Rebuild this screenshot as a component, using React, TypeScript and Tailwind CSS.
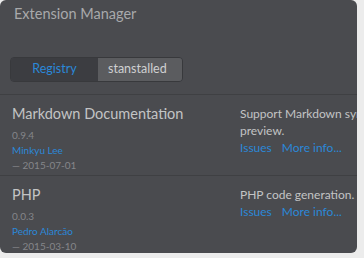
const EXTENSIONS = [
  {
    name: 'Markdown Documentation',
    version: '0.9.4',
    author: 'Minkyu Lee',
    date: '2015-07-01',
    lines: ['Support Markdown syntax', 'preview.'],
  },
  {
    name: 'PHP',
    version: '0.0.3',
    author: 'Pedro Alarcão',
    date: '2015-03-10',
    lines: ['PHP code generation.'],
  },
]

export default function App() {
  return (
    <div className="h-[258px] w-[364px] overflow-hidden bg-[#ececec] font-['Lato',sans-serif]">
      <div className="h-[253px] w-[357px] overflow-hidden rounded-[6px] bg-[#4a4b4f]">
        <div className="h-[95px] border-b border-[#3f4043] px-[14px] pt-[3px]">
          <div className="text-[14.5px] leading-[22px] text-[#a8a9ab]">Extension Manager</div>
          <div className="mt-[32px] -ml-[4px] flex h-[25px] w-[173px] overflow-hidden rounded-[4px] border border-[#38393c] text-[12.5px]">
            <div className="flex w-[87px] items-center justify-center bg-[#3c3d41] text-[#2b88d8]">Registry</div>
            <div className="flex flex-1 items-center bg-[#5b5c5f] pl-[10px] text-[#cfd0d1]">stanstalled</div>
          </div>
        </div>
        {EXTENSIONS.map((e) => (
          <div key={e.name} className="flex h-[81px] border-b border-[#3f4043] pl-[12px]">
            <div className="w-[228px] shrink-0 pt-[9px]">
              <div className="text-[14.5px] leading-[20px] text-[#c3c4c5]">{e.name}</div>
              <div className="mt-[4px] text-[10px] leading-[15px] text-[#85868a]">{e.version}</div>
              <div className="text-[10px] leading-[15px] text-[#2b88d8]">{e.author}</div>
              <div className="text-[10px] leading-[15px] text-[#85868a]">— {e.date}</div>
            </div>
            <div className="min-w-0 flex-1 whitespace-nowrap pt-[10px] text-[12px] leading-[17px]">
              {e.lines.map((l) => (
                <div key={l} className="text-[#c3c4c5]">{l}</div>
              ))}
              <div className="flex gap-[10px] text-[#2b88d8]">
                <span>Issues</span>
                <span>More info...</span>
              </div>
            </div>
          </div>
        ))}
      </div>
    </div>
  )
}
